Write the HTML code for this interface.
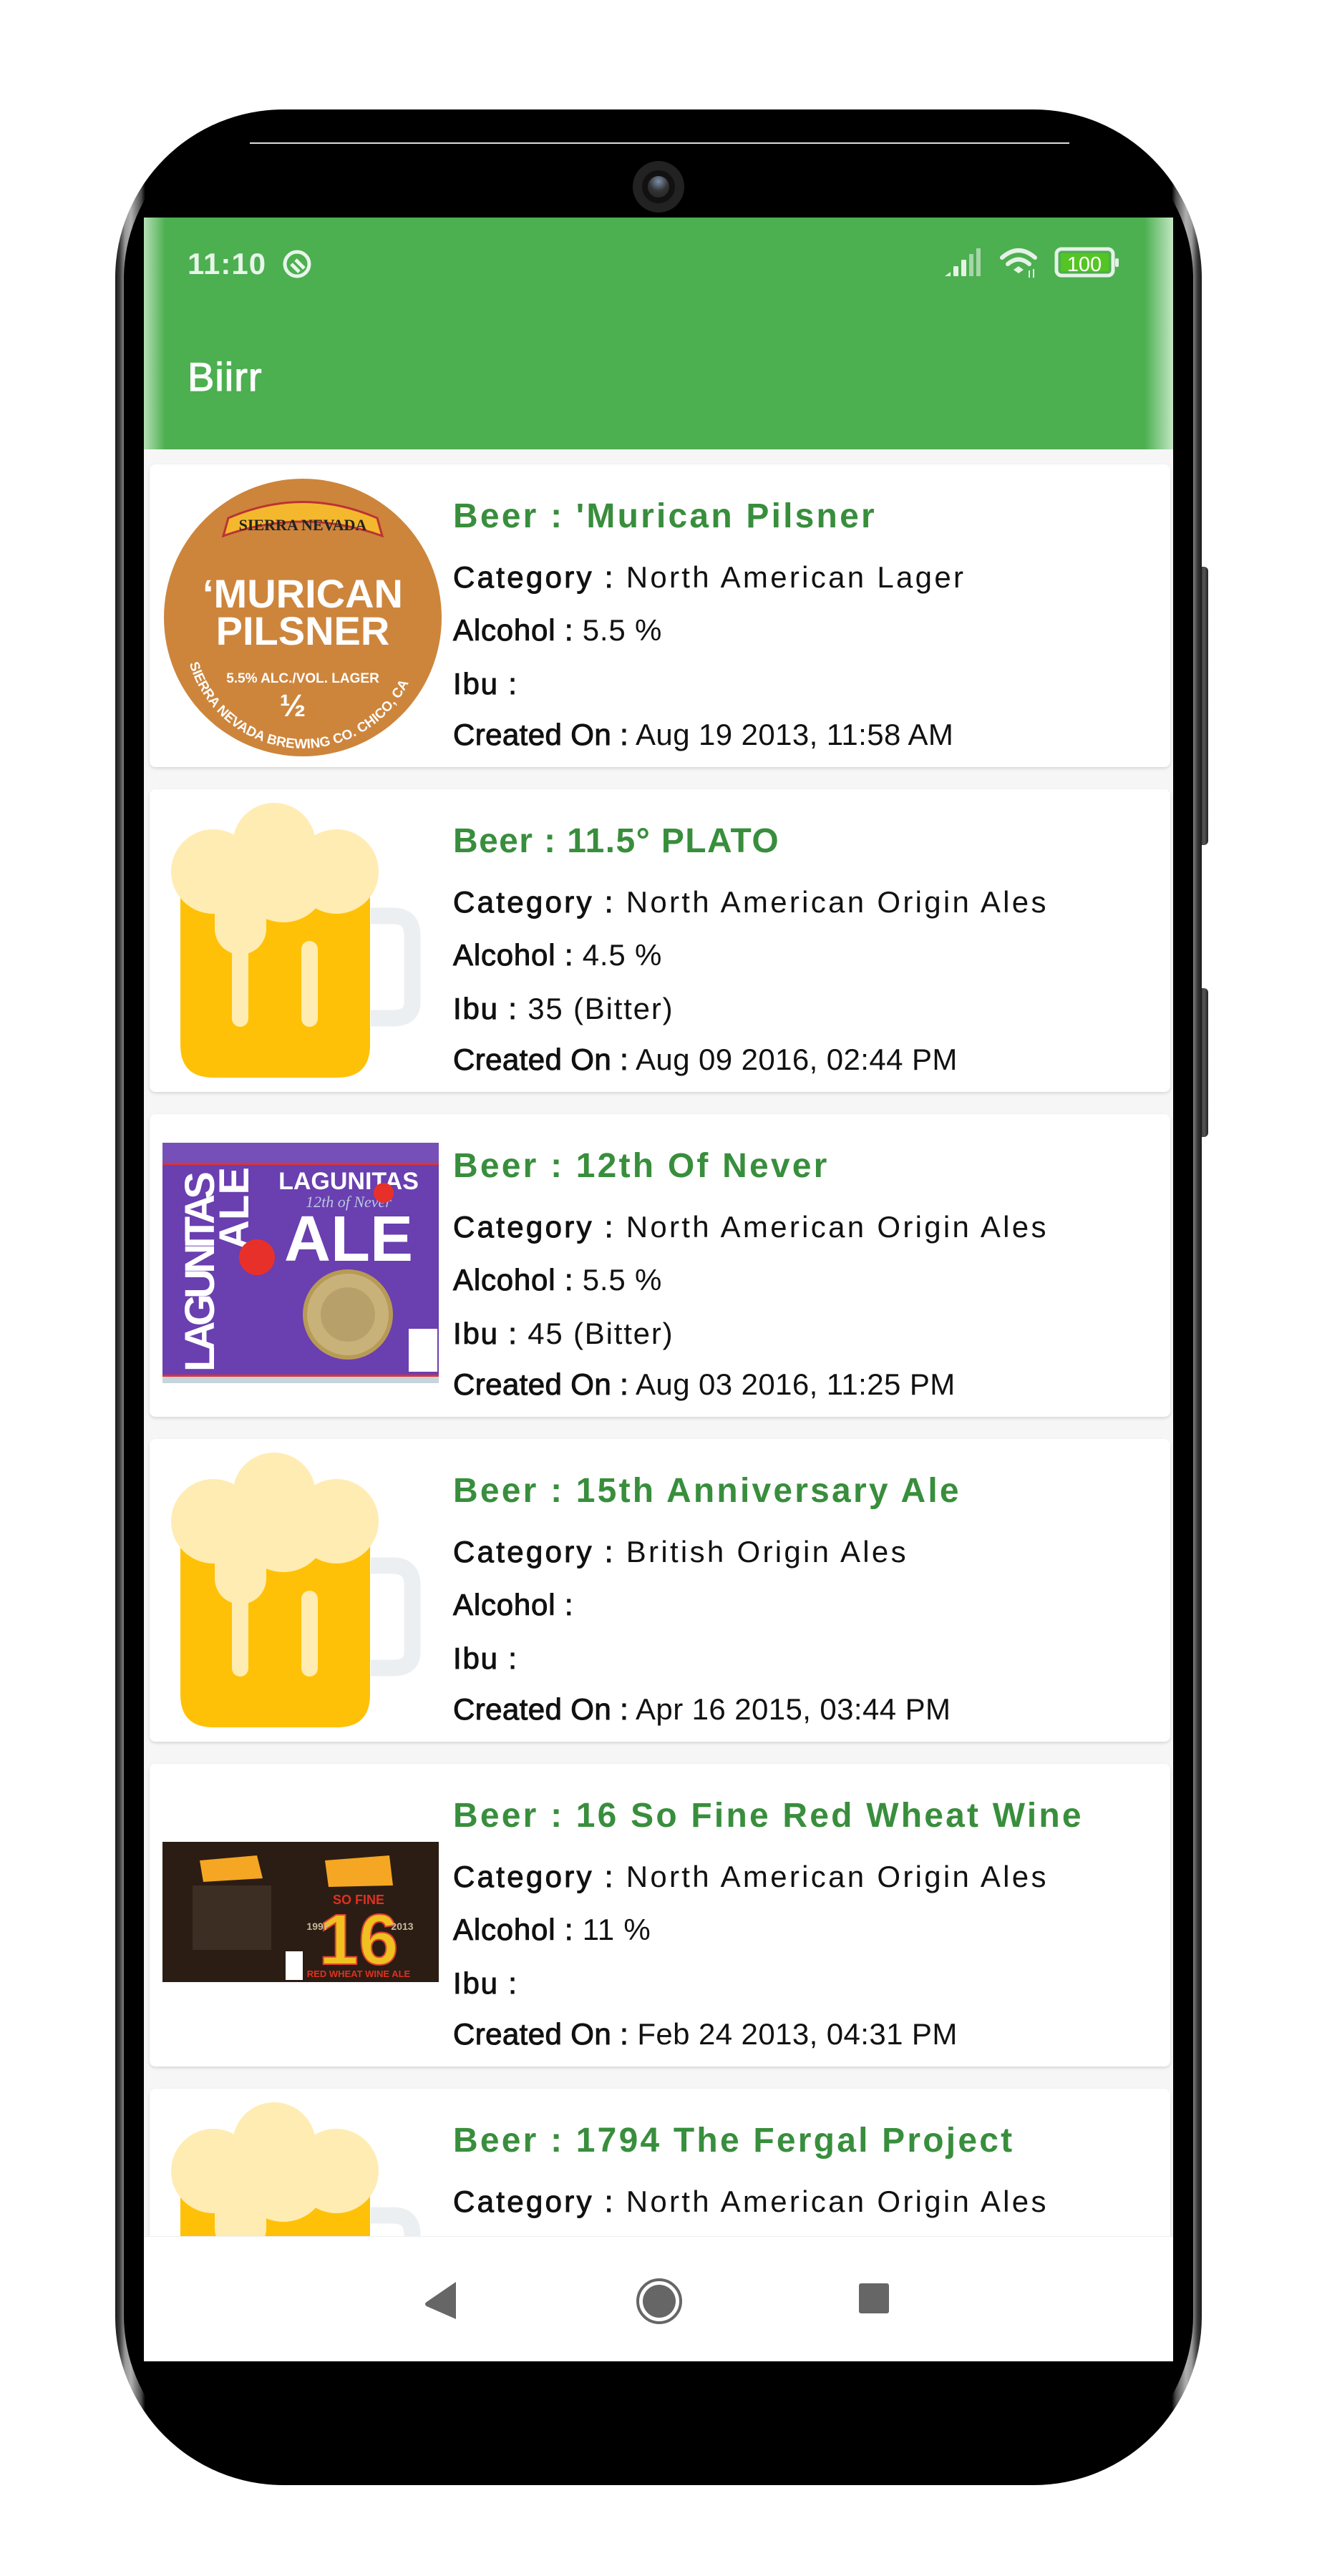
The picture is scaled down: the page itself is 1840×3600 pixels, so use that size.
<!DOCTYPE html>
<html><head><meta charset="utf-8"><style>
*{margin:0;padding:0;box-sizing:border-box}
body{width:1840px;height:3600px;background:#fff;position:relative;overflow:hidden;font-family:"Liberation Sans",sans-serif}
.abs{position:absolute}
.phone{left:161px;top:153px;width:1518px;height:3320px;border-radius:235px;background:linear-gradient(90deg,#1a1a1a 0,#3a3a3a 6px,#9a9a9a 14px,#b0b0b0 22px,#505050 36px,#000 42px,#000 1476px,#505050 1482px,#b0b0b0 1496px,#9a9a9a 1504px,#3a3a3a 1512px,#1a1a1a 1518px);}
.phone-in{left:173px;top:165px;width:1494px;height:3296px;border-radius:225px;background:#000}
.screen{left:201px;top:304px;width:1438px;height:2996px;background:#f6f6f6;overflow:hidden}
.card{position:absolute;left:8px;width:1426px;height:423px;background:#fff;border-radius:8px;box-shadow:0 2px 4px rgba(0,0,0,.13)}
.t{position:absolute;left:424px;white-space:nowrap}
.ti{font-weight:bold;font-size:48px;color:#388E3C;letter-spacing:3.2px}
.ln{font-size:42px;color:#111;letter-spacing:3.3px}
.ln b{font-weight:normal;-webkit-text-stroke:1px #111}
.al{letter-spacing:0.8px}.ib{letter-spacing:1.8px}.cr{letter-spacing:0.4px}
</style></head><body>
<div class="abs" style="left:1677px;top:792px;width:11px;height:389px;background:linear-gradient(90deg,#333,#555,#222);border-radius:0 6px 6px 0"></div>
<div class="abs" style="left:1677px;top:1381px;width:11px;height:208px;background:linear-gradient(90deg,#333,#555,#222);border-radius:0 6px 6px 0"></div>
<div class="abs phone"></div>
<div class="abs phone-in"></div>
<div class="abs" style="left:349px;top:199px;width:1145px;height:2px;background:#ddd"></div>
<div class="abs" style="left:884px;top:225px;width:72px;height:72px;border-radius:50%;background:#222"></div>
<div class="abs" style="left:897px;top:238px;width:46px;height:46px;border-radius:50%;background:#111"></div>
<div class="abs" style="left:905px;top:246px;width:30px;height:30px;border-radius:50%;background:radial-gradient(circle at 50% 25%,#7a8fa8,#333 50%,#222)"></div>

<div class="abs screen">
 <div class="abs" style="left:0;top:0;width:1438px;height:324px;background:#4CAF50"></div>
 <div class="abs" style="left:0;top:0;width:30px;height:324px;background:linear-gradient(90deg,#b5e0b6,#4CAF50)"></div>
 <div class="abs" style="right:0;top:0;width:40px;height:324px;background:linear-gradient(270deg,#c2e6c3,#4CAF50)"></div>
 <div class="abs" style="left:61px;top:41px;font-size:42px;font-weight:bold;color:#e8f5e9;letter-spacing:1px">11:10</div>
 <svg class="abs" style="left:192px;top:43px" width="44" height="44" viewBox="0 0 44 44"><circle cx="22" cy="22" r="17" fill="none" stroke="#e8f5e9" stroke-width="5"/><path d="M14 22 L25 33 M20 16 L32 28" stroke="#e8f5e9" stroke-width="5"/></svg>
 <svg class="abs" style="left:1117px;top:40px" width="250" height="50" viewBox="0 0 250 50">
  <g fill="#e6f2e6"><path d="M2 42 L10 36 L10 42Z"/><rect x="14" y="28" width="7" height="14" rx="1"/><rect x="25" y="19" width="7" height="23" rx="1"/></g>
  <g fill="#a6d6a8"><rect x="36" y="11" width="6" height="31"/><rect x="46" y="3" width="6" height="39"/></g>
  <g fill="none" stroke="#e6f2e6" stroke-width="6" stroke-linecap="round"><path d="M82 16 Q105 -4 128 16"/><path d="M90 25 Q105 12 120 25"/></g>
  <path d="M98 33 L105 28 L112 33 L105 38Z" fill="#e6f2e6"/>
  <path d="M120 34 L120 44 M126 32 L126 44" stroke="#e6f2e6" stroke-width="2"/>
  <rect x="158" y="4" width="79" height="37" rx="7" fill="none" stroke="#e6f2e6" stroke-width="5"/>
  <rect x="164" y="10" width="67" height="25" fill="#55c425"/>
  <rect x="240" y="17" width="5" height="12" rx="2" fill="#e6f2e6"/>
  <text x="197" y="35" font-size="29" fill="#fff" text-anchor="middle" font-family="Liberation Sans">100</text>
 </svg>
 <div class="abs" style="left:61px;top:190px;font-size:56px;color:#fff;-webkit-text-stroke:1.2px #fff;letter-spacing:1px">Biirr</div>

 <!-- card 1 -->
 <div class="card" style="top:345px">
  <svg class="abs" style="left:0;top:0" width="420" height="423">
   <defs><path id="arc" d="M50 250 A165 165 0 0 0 378 250"/></defs>
   <circle cx="214" cy="214" r="194" fill="#CD853C"/>
   <path d="M110 75 Q214 30 318 75 L325 100 Q214 60 103 100Z" fill="#f4b82e" stroke="#b33" stroke-width="3"/>
   <text x="214" y="92" font-size="22" fill="#222" text-anchor="middle" font-weight="bold" font-family="Liberation Serif">SIERRA NEVADA</text>
   <text x="214" y="200" font-size="56" fill="#fff" text-anchor="middle" font-weight="bold">‘MURICAN</text>
   <text x="214" y="252" font-size="56" fill="#fff" text-anchor="middle" font-weight="bold">PILSNER</text>
   <text x="214" y="305" font-size="19" fill="#fff" text-anchor="middle" font-weight="bold">5.5% ALC./VOL. LAGER</text>
   <text x="200" y="352" font-size="44" fill="#fff" text-anchor="middle" font-weight="bold">½</text>
   <text font-size="19" fill="#fff" font-weight="bold"><textPath href="#arc" startOffset="6%">SIERRA NEVADA BREWING CO. CHICO, CA</textPath></text>
  </svg>
  <div class="t ti" style="top:45px">Beer : 'Murican Pilsner</div>
  <div class="t ln" style="top:134px"><b>Category :</b> North American Lager</div>
  <div class="t ln al" style="top:208px"><b>Alcohol :</b> 5.5 %</div>
  <div class="t ln ib" style="top:283px"><b>Ibu :</b> </div>
  <div class="t ln cr" style="top:354px"><b>Created On :</b> Aug 19 2013, 11:58 AM</div>
 </div>

 <!-- card 2 -->
 <div class="card" style="top:799px">
  <svg class="abs" style="left:0;top:0" width="420" height="423"><use href="#mug"/></svg>
  <div class="t ti" style="top:45px;letter-spacing:1.4px">Beer : 11.5° PLATO</div>
  <div class="t ln" style="top:134px"><b>Category :</b> North American Origin Ales</div>
  <div class="t ln al" style="top:208px"><b>Alcohol :</b> 4.5 %</div>
  <div class="t ln ib" style="top:283px"><b>Ibu :</b> 35 (Bitter)</div>
  <div class="t ln cr" style="top:354px"><b>Created On :</b> Aug 09 2016, 02:44 PM</div>
 </div>

 <!-- card 3 -->
 <div class="card" style="top:1253px">
  <svg class="abs" style="left:0;top:0" width="420" height="423">
   <rect x="18" y="40" width="386" height="336" fill="#6a3fb0"/>
   <rect x="18" y="40" width="386" height="30" fill="#7650b8"/>
   <rect x="18" y="68" width="386" height="3" fill="#d33"/>
   <rect x="18" y="364" width="386" height="3" fill="#d33"/>
   <rect x="18" y="367" width="386" height="9" fill="#c8d4dc"/>
   <text transform="translate(90,360) rotate(-90)" font-size="58" font-weight="bold" fill="#fff" textLength="280">LAGUNITAS</text>
   <text transform="translate(138,190) rotate(-90)" font-size="58" font-weight="bold" fill="#fff">ALE</text>
   <circle cx="150" cy="200" r="25" fill="#e8302a"/>
   <text x="278" y="105" font-size="34" font-weight="bold" fill="#fff" text-anchor="middle">LAGUNITAS</text>
   <text x="278" y="130" font-size="22" font-style="italic" fill="#b8c8e0" text-anchor="middle" font-family="Liberation Serif">12th of Never</text>
   <text x="278" y="205" font-size="90" font-weight="bold" fill="#fff" text-anchor="middle">ALE</text>
   <circle cx="327" cy="110" r="14" fill="#e8302a"/>
   <circle cx="277" cy="280" r="60" fill="#c9b27a" stroke="#b79b55" stroke-width="6"/>
   <circle cx="277" cy="280" r="38" fill="#b8a06a"/>
   <rect x="362" y="300" width="40" height="60" fill="#fff"/>
  </svg>
  <div class="t ti" style="top:45px">Beer : 12th Of Never</div>
  <div class="t ln" style="top:134px"><b>Category :</b> North American Origin Ales</div>
  <div class="t ln al" style="top:208px"><b>Alcohol :</b> 5.5 %</div>
  <div class="t ln ib" style="top:283px"><b>Ibu :</b> 45 (Bitter)</div>
  <div class="t ln cr" style="top:354px"><b>Created On :</b> Aug 03 2016, 11:25 PM</div>
 </div>

 <!-- card 4 -->
 <div class="card" style="top:1707px">
  <svg class="abs" style="left:0;top:0" width="420" height="423"><use href="#mug"/></svg>
  <div class="t ti" style="top:45px">Beer : 15th Anniversary Ale</div>
  <div class="t ln" style="top:134px"><b>Category :</b> British Origin Ales</div>
  <div class="t ln al" style="top:208px"><b>Alcohol :</b> </div>
  <div class="t ln ib" style="top:283px"><b>Ibu :</b> </div>
  <div class="t ln cr" style="top:354px"><b>Created On :</b> Apr 16 2015, 03:44 PM</div>
 </div>

 <!-- card 5 -->
 <div class="card" style="top:2161px">
  <svg class="abs" style="left:0;top:0" width="420" height="423">
   <rect x="18" y="109" width="386" height="196" fill="#2b1d14"/>
   <path d="M70 135 L150 128 L158 160 L75 165Z" fill="#f5a623"/>
   <path d="M245 135 L335 128 L340 170 L250 172Z" fill="#f5a623"/>
   <text x="292" y="196" font-size="18" font-weight="bold" fill="#e03020" text-anchor="middle">SO FINE</text>
   <text x="292" y="280" font-size="100" font-weight="bold" fill="#f0c020" stroke="#e04030" stroke-width="2" text-anchor="middle">16</text>
   <text x="235" y="232" font-size="14" font-weight="bold" fill="#c8b89a" text-anchor="middle">1997</text>
   <text x="353" y="232" font-size="14" font-weight="bold" fill="#c8b89a" text-anchor="middle">2013</text>
   <text x="292" y="298" font-size="13" font-weight="bold" fill="#e03020" text-anchor="middle">RED WHEAT WINE ALE</text>
   <rect x="190" y="262" width="24" height="40" fill="#fff"/>
   <rect x="60" y="170" width="110" height="90" fill="#4a3b2e" opacity=".6"/>
  </svg>
  <div class="t ti" style="top:45px">Beer : 16 So Fine Red Wheat Wine</div>
  <div class="t ln" style="top:134px"><b>Category :</b> North American Origin Ales</div>
  <div class="t ln al" style="top:208px"><b>Alcohol :</b> 11 %</div>
  <div class="t ln ib" style="top:283px"><b>Ibu :</b> </div>
  <div class="t ln cr" style="top:354px"><b>Created On :</b> Feb 24 2013, 04:31 PM</div>
 </div>

 <!-- card 6 -->
 <div class="card" style="top:2615px">
  <svg class="abs" style="left:0;top:0" width="420" height="423"><use href="#mug"/></svg>
  <div class="t ti" style="top:45px">Beer : 1794 The Fergal Project</div>
  <div class="t ln" style="top:134px"><b>Category :</b> North American Origin Ales</div>
 </div>

 <!-- nav bar -->
 <div class="abs" style="left:0;top:2821px;width:1438px;height:175px;background:#fff;border-top:1px solid #eee"></div>
 <svg class="abs" style="left:0;top:2821px" width="1438" height="175">
  <path d="M436 64 L395 92 Q391 95 395 98 L436 116Z" fill="#666"/>
  <circle cx="720" cy="91" r="30" fill="none" stroke="#666" stroke-width="4"/>
  <circle cx="720" cy="91" r="23" fill="#666"/>
  <rect x="999" y="66" width="42" height="42" rx="3" fill="#666"/>
 </svg>
</div>

<svg width="0" height="0" style="position:absolute">
 <defs>
  <g id="mug">
   <path d="M309 177 L340 177 Q367 177 367 204 L367 298 Q367 320 340 320 L309 320" fill="none" stroke="#ECEFF1" stroke-width="23"/>
   <path d="M43 148 L308 148 L308 357 Q308 403 262 403 L89 403 Q43 403 43 357Z" fill="#FFC107"/>
   <g fill="#FFECB3">
    <circle cx="89" cy="115" r="59"/>
    <circle cx="174" cy="77" r="58"/>
    <circle cx="261" cy="115" r="59"/>
    <ellipse cx="187" cy="128" rx="60" ry="58"/>
    <path d="M91 150 L163 150 L163 195 A36 36 0 0 1 91 195Z"/>
    <rect x="115" y="180" width="23" height="152" rx="11.5"/>
    <rect x="212" y="212" width="23" height="120" rx="11.5"/>
    <rect x="89" y="115" width="172" height="45"/>
   </g>
  </g>
 </defs>
</svg>
</body></html>
